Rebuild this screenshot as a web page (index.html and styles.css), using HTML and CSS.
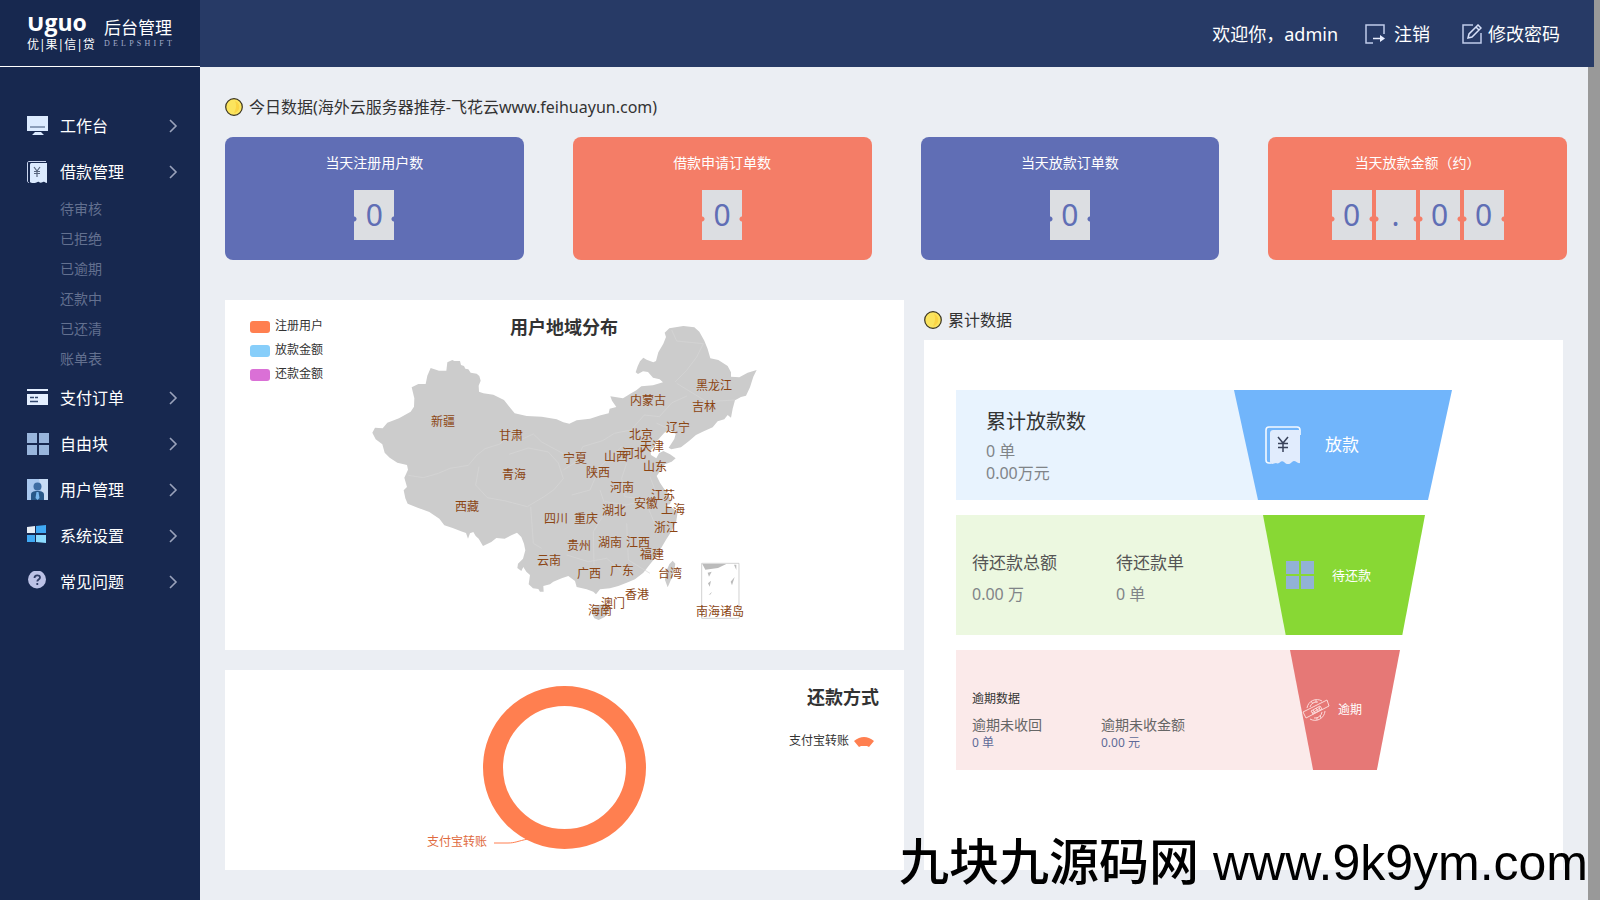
FILE: index.html
```html
<!DOCTYPE html>
<html lang="zh-CN">
<head>
<meta charset="utf-8">
<title>后台管理</title>
<link rel="stylesheet" href="styles.css">
</head>
<body>
<svg class="defs" aria-hidden="true">
  <symbol id="chevron" viewBox="0 0 10 14"><path d="M2 1l6 6-6 6" fill="none" stroke="#9aa3bb" stroke-width="1.6"/></symbol>
  <symbol id="coin" viewBox="0 0 18 18"><circle cx="9" cy="9" r="8.3" fill="#fbe45e" stroke="#3a3420" stroke-width="1.2"/><path d="M10 3c3 1 5 4 4 8-1 2-3 4-5 4 2-4 3-8 1-12z" fill="#fbd445"/></symbol>
  <symbol id="receipt" viewBox="0 0 36 38"><path d="M6 37H4c-2 0-3-1-3-3V4c0-2 1-3 3-3h28c2 0 3 1 3 3v5" fill="none" stroke="#f4f9ff" stroke-width="1.6"/><path d="M5 8c0-3 1-4 4-4h26v33c-3 1-5-4-8-1-3 3-5 3-8 0-3-3-5 3-8 1-3 1-6 2-6-2z" fill="#e1ecfd"/><path d="M13 11l5 6 5-6M13 17.500h10M13 21.500h10M18 17v9" stroke="#39425a" stroke-width="1.5" fill="none"/></symbol>
</svg>
<div class="app">
  <aside class="sidebar">
    <div class="logo">
      <div class="brand"><span class="brand-name">Uguo</span><span class="brand-cn">优|果|信|贷</span></div>
      <div class="product"><span class="product-cn">后台管理</span><span class="product-en"><b>D</b><i>E</i><i>L</i><i>P</i><i>S</i><i>H</i><i>I</i><i>F</i><i>T</i></span></div>
    </div>
    <nav class="menu">
      <a class="item" href="#"><svg class="icon" viewBox="0 0 22 22"><path fill="#dcebff" d="M0 1h21v15H0zM8 17h6l3 3H5z"/><path stroke="#7185a3" stroke-width="1.500" d="M3 12h15"/></svg><span>工作台</span><svg class="arrow"><use href="#chevron"/></svg></a>
      <a class="item" href="#"><svg class="icon" viewBox="0 0 22 22"><path d="M2 21.500c-1 0-1.500-.5-1.500-1.500V2C.5 1 1 .5 2 .5h17" fill="none" stroke="#c9d5ee"/><path fill="#dcebff" d="M3 4c0-1.500.5-2 2-2h15v20c-2 0-2-2-4-1s-3 1-4 0-3 1-4 1-5 0-5-1z"/><path d="M7 6l3 4 3-4M7 10.500h6M7 12.500h6M10 10v6" stroke="#59677f" stroke-width="1.200" fill="none"/></svg><span>借款管理</span><svg class="arrow"><use href="#chevron"/></svg></a>
      <div class="sub">
        <a href="#">待审核</a><a href="#">已拒绝</a><a href="#">已逾期</a><a href="#">还款中</a><a href="#">已还清</a><a href="#">账单表</a>
      </div>
      <a class="item" href="#"><svg class="icon" viewBox="0 0 22 22"><path fill="#e4efff" d="M0 2h21v2H0zM0 7h21v11H0z"/><path stroke="#34496f" stroke-width="1.500" d="M3 10.500h4m1 0h3M3 14.500h8"/></svg><span>支付订单</span><svg class="arrow"><use href="#chevron"/></svg></a>
      <a class="item" href="#"><svg class="icon" viewBox="0 0 22 22"><path fill="#98b5dc" d="M0 0h10v10H0zM12 0h10v10H12zM0 12h10v10H0zM12 12h10v10H12z"/></svg><span>自由块</span><svg class="arrow"><use href="#chevron"/></svg></a>
      <a class="item" href="#"><svg class="icon" viewBox="0 0 22 22"><path fill="#a9c8ef" d="M0 0h21v21H0z"/><path fill="#c8dcf5" d="M12 0h9v21h-5z"/><circle cx="10.500" cy="7.500" r="4" fill="#3e6da3"/><path fill="#285889" d="M4 21v-5c0-3 2-4 6.500-4s6.500 1 6.500 4v5z"/><path fill="#79b8ee" d="M9.500 13h2l1 6-2 2-2-2z"/></svg><span>用户管理</span><svg class="arrow"><use href="#chevron"/></svg></a>
      <a class="item" href="#"><svg class="icon" viewBox="0 0 22 22"><path fill="#e8eef5" d="M0 2l8-1v7H0z"/><path fill="#40a9f4" d="M9 1l10-1v8H9zM0 10h8v7H0z"/><path fill="#8ddcff" d="M9 10h10v8L9 17z"/></svg><span>系统设置</span><svg class="arrow"><use href="#chevron"/></svg></a>
      <a class="item" href="#"><svg class="icon" viewBox="0 0 22 22"><circle cx="10" cy="8.500" r="9" fill="#bcc2e6"/><path d="M7.500 7c0-3.500 5.500-3.500 5.500-.5 0 2-2.700 2-2.700 4M10.300 12v2" fill="none" stroke="#303d66" stroke-width="1.800"/></svg><span>常见问题</span><svg class="arrow"><use href="#chevron"/></svg></a>
    </nav>
  </aside>
  <div class="page">
    <header class="topbar">
      <span class="welcome">欢迎你，admin</span>
      <a class="action logout" href="#"><svg viewBox="0 0 20 20"><path d="M8 19H1V1h18v9" fill="none" stroke="#c0cbea" stroke-width="1.500"/><path d="M8 14.500h9" stroke="#e8eeff" stroke-width="1.500"/><path d="M15 11l5 3.500-5 3.500z" fill="#e8eeff"/></svg>注销</a>
      <a class="action password" href="#"><svg viewBox="0 0 20 20"><path d="M11 1H1v18h18V9" fill="none" stroke="#c0cbea" stroke-width="1.500"/><path d="M6 14l1-4 9-9 3 3-9 9zM14 3l3 3" fill="none" stroke="#d7e0f8" stroke-width="1.500"/></svg>修改密码</a>
    </header>
    <main class="content">
      <h2 class="heading"><svg><use href="#coin"/></svg>今日数据(海外云服务器推荐-飞花云www.feihuayun.com)</h2>
      <section class="stats">
        <div class="stat blue"><h3>当天注册用户数</h3><div class="digits"><span>0</span></div></div>
        <div class="stat coral"><h3>借款申请订单数</h3><div class="digits"><span>0</span></div></div>
        <div class="stat blue"><h3>当天放款订单数</h3><div class="digits"><span>0</span></div></div>
        <div class="stat coral"><h3>当天放款金额（约）</h3><div class="digits"><span>0</span><span>.</span><span>0</span><span>0</span></div></div>
      </section>
      <div class="charts">
        <div class="left">
          <section class="panel">
            <svg class="chart" viewBox="0 0 679 350" role="img" aria-label="用户地域分布">
              <rect x="25" y="21" width="20" height="12" rx="3" fill="#ff7f50"/><rect x="25" y="45" width="20" height="12" rx="3" fill="#87cefa"/><rect x="25" y="69" width="20" height="12" rx="3" fill="#da70d6"/>
              <g class="legend"><text x="50" y="30">注册用户</text><text x="50" y="54">放款金额</text><text x="50" y="78">还款金额</text></g>
              <g transform="translate(135 10) scale(.33333)">
                <path fill="#ccc" d="M283 153l17 0 3 12 9 3 4 8 9 2 7 10 18 3 8 7 4 14-6 15 1 18 13 5 30 4 32 16 16 20 16 20 36 8 45 2 45 8 20 9 18 4 22-10 40-5 32-10 24-6 3-14 20-5-13-19-5-13 38 6 22-14 18-10 15-12 35-3 30-9-10-9-20-5-15-17-15-2-15 8-7-5 6-18 7-15 10-11 10 6 20 8 8-4 7-26 15-26 8-20-4-13 14-13 42-7 33 4 15 13 15 27 10 25 8 28 24 5 28 18 10 19 0 13 25 2 25-14 27-8-10 20-10 32-12 25-15 4-18 10-7 25-5 27-10-8-10 13-20 6-15 18-30 13-20 10-20 17-25 20-29 6-8-5 17-26 4-15-18-12-16 8-14 16-12 15-4 12-12 10 2 14 16 10 8-15 13-7 20 10 17 12-12 10-20 8-10 15-8 10-7 10 10 20 10 15 15 20 8 20-3 10-15 2 20 8 18 12-4 28-14 30-16 25-15 25-14 25-20 25-20 25-25 20-25 10-25 10-25 7-30 3-12 15-8-8-20-7-30-7-5-18-20-15-20 7-25 10-10 8-20 5 1 17-11 0-5-8-16-2-13-12 4-28-11-10-9-14-6 12-12-9 2-13 15-15 7-25-4-20-8-20-13-13-17 8-20 10-25-2-15 12-25 12-13-22-9-8-7-12-10 4-6 16-6-17-15-5-25-10-25-8-15-20-30-20-35-13-30-12-7-16-5-24 10-10-8-28 11-24-3-14-29-7-23-15-15-15-7-25-20-15-10-20 8-15 23 2 14-17 35-13 35-20 10-15 1-25-8-33 20-10 22 0 5-25 10-23 25 8 22 0 3-25 15-7z"/>
                <path fill="#ccc" d="M698 893l18-8 22-3 12 7-4 16-12 16-18 9-13-5-7-14zM938 752l8 9-4 25-12 30-7 16-8-22 3-25 10-22z"/>
                <path fill="none" stroke="#d6d6d6" stroke-width="2" d="M145 496l45 7 45-13 35-15 55-9 25-30 25-20 45-14 20-19 45 5 35-16 25 24 65 35M357 470l-10 55 35 38 55 10 65 17 50-30 30-21 28-33-15-47-30-33-60-12-58 19M512 590l8 110 25 15M610 480l40-25 18-45 60-18 35-22 50-10 40-45 45 5 38-42 45-20M635 555l55-15 30-70 65-60M720 540l20 60-40 65 2 100M735 575l65 10 75-20M800 460l-15 45 10 55 70 10M800 640l5 110 65 40M870 500l15 40-20 55 25 60M620 735l65 20 55-10 35 30 30 35M890 340l70 30M950 220l90 55 85-5M935 60l15 33 80 8-20 40-30 40-35 35"/>
                <path d="M1025 760h112v165h-112z" stroke="#bbb" stroke-width="2" fill="none"/><path d="M1027 762h72l-25 12-38 5zM1122 764h7v16zM1043 788l12-3-8 15zM1044 820l9-8-4 18zM1046 855l10-10-4 8zM1112 815l12-14-8 25zM1104 852l14-14z" fill="#bbb"/>
              </g>
              <g class="provinces"><text x="218" y="126">新疆</text><text x="286" y="140">甘肃</text><text x="289" y="179">青海</text><text x="242" y="211">西藏</text><text x="350" y="163">宁夏</text><text x="391" y="161">山西</text><text x="409" y="158">河北</text><text x="416" y="139">北京</text><text x="427" y="151">天津</text><text x="453" y="132">辽宁</text><text x="423" y="105">内蒙古</text><text x="489" y="90">黑龙江</text><text x="479" y="111">吉林</text><text x="373" y="177">陕西</text><text x="430" y="171">山东</text><text x="397" y="192">河南</text><text x="438" y="200">江苏</text><text x="421" y="208">安徽</text><text x="448" y="214">上海</text><text x="389" y="215">湖北</text><text x="331" y="223">四川</text><text x="361" y="223">重庆</text><text x="441" y="232">浙江</text><text x="354" y="250">贵州</text><text x="385" y="247">湖南</text><text x="413" y="247">江西</text><text x="427" y="259">福建</text><text x="324" y="265">云南</text><text x="364" y="278">广西</text><text x="397" y="275">广东</text><text x="445" y="278">台湾</text><text x="412" y="299">香港</text><text x="388" y="308">澳门</text><text x="375" y="315">海南</text><text x="495" y="316">南海诸岛</text></g>
              <text class="title" x="339" y="34" text-anchor="middle">用户地域分布</text>
            </svg>
          </section>
          <section class="panel">
            <svg class="chart" viewBox="0 0 679 200" role="img" aria-label="还款方式">
              <circle cx="339.500" cy="97.500" r="71.500" fill="none" stroke="#ff7f50" stroke-width="20"/>
              <path d="M269 173h14c7 0 10-2 20-4" fill="none" stroke="#ff7f50"/>
              <text class="callout" x="202" y="176">支付宝转账</text>
              <text class="title" x="654" y="34" text-anchor="end">还款方式</text>
              <g class="legend"><text x="564" y="75">支付宝转账</text></g>
              <path fill="#ff7f50" d="M629 71q10-8 20 0l-5 6-2-1h-6l-2 1z"/>
            </svg>
          </section>
        </div>
        <div class="right">
          <h2 class="heading"><svg><use href="#coin"/></svg>累计数据</h2>
          <section class="panel funnel">
            <div class="row loan">
              <div class="info"><h3>累计放款数</h3><p>0 单</p><p>0.00万元</p></div>
              <div class="shape"><svg><use href="#receipt"/></svg>放款</div>
            </div>
            <div class="row due">
              <div class="info"><dl><dt>待还款总额</dt><dd>0.00 万</dd></dl><dl><dt>待还款单</dt><dd>0 单</dd></dl></div>
              <div class="shape"><svg viewBox="0 0 28 28"><path fill="#92b2d5" d="M0 0h13v13H0zM15 0h13v13H15zM0 15h13v13H0zM15 15h13v13H15z"/></svg>待还款</div>
            </div>
            <div class="row late">
              <div class="info"><h3>逾期数据</h3><div class="pairs"><dl><dt>逾期未收回</dt><dd>0 单</dd></dl><dl><dt>逾期未收金额</dt><dd>0.00 元</dd></dl></div></div>
              <div class="shape"><svg viewBox="0 0 28 24" fill="none" stroke="#fbd9d9"><path d="M5 10a10 10 0 0 1 15-7M8 9a7 7 0 0 1 8-5M23 13a10 10 0 0 1-15 8M20 14a7 7 0 0 1-8 6M9 3l2 3M14 2v3M15 22v-3M19 20l-1-3"/><path d="M1 14L25 2l2 6L4 20z"/><path d="M9 13l9-5 2 3-9 5zM11 12l2 3M14 10l2 4M17 9l1 3M10 15l8-5"/></svg>逾期</div>
            </div>
          </section>
        </div>
      </div>
    </main>
  </div>
</div>
<div class="watermark">九块九源码网 www.9k9ym.com</div>
</body>
</html>
```

FILE: styles.css
```css
* { box-sizing: border-box; }
body, h2, h3, p, dl, dd { margin: 0; }
body { background: #999; color: #333; font: 16px/24px "Noto Sans", "Noto Sans CJK SC", sans-serif; overflow: hidden; }
a { color: inherit; text-decoration: none; }
svg { display: block; flex: none; }
h2, h3 { font-weight: 400; }
.defs { position: absolute; width: 0; height: 0; }
.app { display: grid; grid-template-columns: 200px 1fr; min-height: 100vh; }

.sidebar { background: #17284f; color: #fff; }
.logo { display: flex; gap: 11px; height: 67px; padding: 17px 0 0 27px; border-bottom: 1px solid #fff; }
.brand { width: 66px; }
.brand-name { display: block; height: 20px; overflow: hidden; font: 700 23px/10px "Open Sans", sans-serif; }
.brand-cn { display: block; font-size: 12px; line-height: 16px; white-space: nowrap; }
.product-cn { display: block; font-size: 17px; line-height: 22px; }
.product-en { display: flex; justify-content: space-between; color: #a3aecb; font: 8px/10px "Liberation Serif", serif; }
.product-en b, .product-en i { font-weight: 400; font-style: normal; }
.menu { padding-top: 36px; }
.item { display: flex; align-items: center; height: 46px; padding: 0 22px 0 27px; }
.icon { width: 22px; height: 22px; margin-right: 11px; }
.item span { flex: 1; }
.arrow { width: 10px; height: 14px; }
.sub { margin-top: -1px; padding-bottom: 1px; }
.sub a { display: block; padding-left: 60px; color: #63708f; font-size: 14px; line-height: 30px; }

.page { min-width: 0; }
.topbar { display: flex; align-items: center; justify-content: flex-end; height: 67px; margin-right: 6px; padding-right: 34px; background: #273a66; color: #fff; font-size: 18px; }
.action { display: flex; align-items: center; }
.action svg { width: 20px; height: 20px; }
.logout { gap: 9px; margin: 0 32px 0 27px; }
.password { gap: 6px; }
.content { min-height: calc(100vh - 67px); margin-right: 12px; padding: 28px 25px 0; background: #ebeef3; }
.heading { display: flex; align-items: center; gap: 6px; font-size: 16px; line-height: 24px; }
.heading svg { width: 18px; height: 18px; }
.stats { display: grid; grid-template-columns: repeat(4, 1fr); gap: 49px; margin: 18px -4px 40px 0; }
.stat { height: 123px; padding-top: 16px; border-radius: 8px; color: #fff; text-align: center; }
.stat h3 { font-size: 14px; line-height: 20px; }
.blue { background: #606eb5; }
.coral { background: #f47d67; }
.digits { display: flex; justify-content: center; gap: 4px; margin-top: 17px; }
.digits span { width: 40px; height: 50px; background: radial-gradient(circle at 0 29px, #0000 2px, #dcdee2 3px) left / 50% 100% no-repeat, radial-gradient(circle at 100% 29px, #0000 2px, #dcdee2 3px) right / 50% 100% no-repeat; color: #606eb5; font-size: 30px; line-height: 50px; }

.charts { display: grid; grid-template-columns: 679fr 639fr; gap: 20px; }
.panel { background: #fff; }
.left { display: grid; gap: 20px; align-content: start; }
.chart { width: 100%; height: auto; font-size: 12px; }
.title { font-size: 18px; font-weight: 700; fill: #333; }
.legend { fill: #333; }
.provinces { fill: #8b4513; text-anchor: middle; }
.callout { fill: #e06b40; }
.right { display: flex; flex-direction: column; padding-top: 8px; }
.right .heading { margin-bottom: 8px; }
.funnel { flex: 1; display: flex; flex-direction: column; gap: 15px; padding: 50px 32px; }
.row { display: flex; height: 120px; }
.info { flex: none; margin-right: -24px; padding-left: 16px; }
.shape { display: flex; align-items: center; color: #fff; font-size: 12px; }
.loan { height: 110px; }
.loan .info { width: 302px; padding: 18px 0 0 30px; background: #e8f3fe; }
.loan h3 { margin-bottom: 4px; font-size: 20px; line-height: 28px; }
.loan p { color: #808488; line-height: 22px; }
.loan .shape { width: 218px; padding-left: 31px; gap: 24px; background: #71b5fb; clip-path: polygon(0 0, 100% 0, 89% 100%, 11% 100%); font-size: 17px; }
.loan svg { width: 36px; height: 38px; }
.due .info { display: flex; gap: 59px; width: 331px; padding-top: 32px; background: #ecf8e0; }
.due dt { color: #555; font-size: 17px; line-height: 32px; }
.due dd { color: #808488; line-height: 30px; }
.due .shape { width: 162px; padding-left: 23px; gap: 18px; background: #88d834; clip-path: polygon(0 0, 100% 0, 86% 100%, 14% 100%); font-size: 13px; }
.due svg { width: 28px; height: 28px; }
.late .info { width: 358px; padding-top: 40px; background: #fbeaea; }
.late h3 { font-size: 12px; line-height: 18px; }
.pairs { display: flex; gap: 59px; padding-top: 7px; }
.late dt { color: #666; font-size: 14px; line-height: 20px; }
.late dd { color: #606a98; font-size: 12px; line-height: 16px; }
.late .shape { width: 110px; padding-left: 12px; gap: 8px; background: #e67876; clip-path: polygon(0 0, 100% 0, 79% 100%, 21% 100%); }
.late svg { width: 28px; height: 24px; }
.watermark { position: fixed; right: 12px; bottom: 7px; color: #000; font: 500 50px/60px "Liberation Sans", "Noto Sans CJK SC", sans-serif; white-space: nowrap; }
```
